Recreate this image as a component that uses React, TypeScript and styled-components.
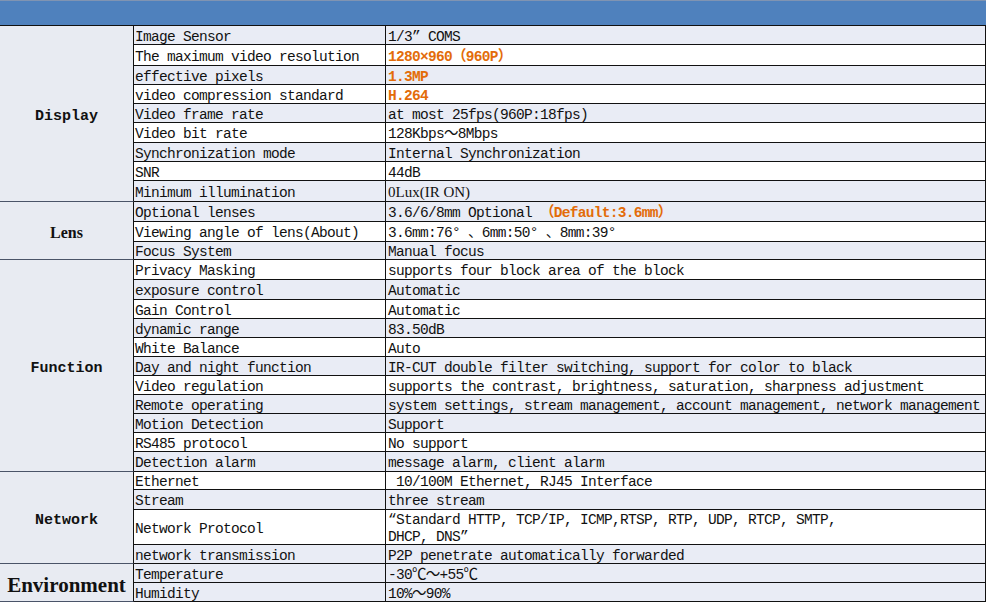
import React from "react";
import styled, { createGlobalStyle } from "styled-components";

const Global = createGlobalStyle`
  html, body { margin: 0; padding: 0; background: #ffffff; }
  body { font-family: "Liberation Mono", monospace; }
`;

type Seg = { t: string; k?: "hl" | "serif" };
type Row = { label: string; value: Seg[]; h: number; shade: boolean };
type Group = { name: string; kind: "mono" | "serif" | "big"; rows: Row[] };

const s = (t: string): Seg[] => [{ t }];

const groups: Group[] = [
  {
    name: "Display",
    kind: "mono",
    rows: [
      { label: "Image Sensor", value: s("1/3” COMS"), h: 19, shade: true },
      { label: "The maximum video resolution", value: [{ t: "1280×960（960P）", k: "hl" }], h: 21, shade: false },
      { label: "effective pixels", value: [{ t: "1.3MP", k: "hl" }], h: 19, shade: true },
      { label: "video compression standard", value: [{ t: "H.264", k: "hl" }], h: 19, shade: false },
      { label: "Video frame rate", value: s("at most 25fps(960P:18fps)"), h: 19, shade: true },
      { label: "Video bit rate", value: s("128Kbps～8Mbps"), h: 20, shade: false },
      { label: "Synchronization mode", value: s("Internal Synchronization"), h: 19, shade: true },
      { label: "SNR", value: s("44dB"), h: 19, shade: false },
      { label: "Minimum illumination", value: [{ t: "0Lux(IR ON)", k: "serif" }], h: 21, shade: true },
    ],
  },
  {
    name: "Lens",
    kind: "serif",
    rows: [
      { label: "Optional lenses", value: [{ t: "3.6/6/8mm Optional " }, { t: "（Default:3.6mm）", k: "hl" }], h: 20, shade: true },
      { label: "Viewing angle of lens(About)", value: s("3.6mm:76° 、6mm:50° 、8mm:39°"), h: 20, shade: false },
      { label: "Focus System", value: s("Manual focus"), h: 18, shade: true },
    ],
  },
  {
    name: "Function",
    kind: "mono",
    rows: [
      { label: "Privacy Masking", value: s("supports four block area of the block"), h: 20, shade: false },
      { label: "exposure control", value: s("Automatic"), h: 20, shade: true },
      { label: "Gain Control", value: s("Automatic"), h: 19, shade: false },
      { label: "dynamic range", value: s("83.50dB"), h: 19, shade: true },
      { label: "White Balance", value: s("Auto"), h: 19, shade: false },
      { label: "Day and night function", value: s("IR-CUT double filter switching, support for color to black"), h: 19, shade: true },
      { label: "Video regulation", value: s("supports the contrast, brightness, saturation, sharpness adjustment"), h: 19, shade: false },
      { label: "Remote operating", value: s("system settings, stream management, account management, network management"), h: 19, shade: true },
      { label: "Motion Detection", value: s("Support"), h: 19, shade: true },
      { label: "RS485 protocol", value: s("No support"), h: 19, shade: false },
      { label: "Detection alarm", value: s("message alarm, client alarm"), h: 20, shade: true },
    ],
  },
  {
    name: "Network",
    kind: "mono",
    rows: [
      { label: "Ethernet", value: s("\u00a010/100M Ethernet, RJ45 Interface"), h: 18, shade: false },
      { label: "Stream", value: s("three stream"), h: 20, shade: true },
      { label: "Network Protocol", value: s("“Standard HTTP, TCP/IP, ICMP,RTSP, RTP, UDP, RTCP, SMTP,\nDHCP, DNS”"), h: 35, shade: false },
      { label: "network transmission", value: s("P2P penetrate automatically forwarded"), h: 19, shade: true },
    ],
  },
  {
    name: "Environment",
    kind: "big",
    rows: [
      { label: "Temperature", value: s("-30℃～+55℃"), h: 19, shade: true },
      { label: "Humidity", value: s("10%～90%"), h: 19, shade: true },
    ],
  },
];

const Sheet = styled.div`
  width: 986px;
  display: flex;
  flex-direction: column;
`;

const HeaderBar = styled.div`
  box-sizing: border-box;
  height: 26px;
  background: #4f81bd;
  border-top: 1px solid #8094b2;
  border-bottom: 1px solid #111;
`;

const GroupBlock = styled.div`
  display: flex;
`;

const GroupLabel = styled.div<{ $kind: "mono" | "serif" | "big" }>`
  box-sizing: border-box;
  width: 134px;
  flex: none;
  display: flex;
  align-items: center;
  justify-content: center;
  background: #e8ebf2;
  border-right: 1px solid #111;
  border-bottom: 1px solid #4a5468;
  color: #111;
  font-weight: bold;
  font-family: ${(p) =>
    p.$kind === "mono" ? '"Liberation Mono", monospace' : '"Liberation Serif", serif'};
  font-size: ${(p) => (p.$kind === "mono" ? "15px" : p.$kind === "serif" ? "16px" : "21px")};
  padding-top: 5px;
`;

const RowList = styled.div`
  display: flex;
  flex-direction: column;
`;

const SpecRow = styled.div<{ $shade: boolean }>`
  box-sizing: border-box;
  display: grid;
  grid-template-columns: 252px 600px;
  border-bottom: 1px solid #111;
  background: ${(p) => (p.$shade ? "#e9ecf5" : "#ffffff")};
`;

const Cell = styled.div<{ $pad: number }>`
  box-sizing: border-box;
  display: flex;
  align-items: center;
  padding: 4px 0 0 ${(p) => p.$pad}px;
  border-right: 1px solid #111;
  font-family: "Liberation Mono", "Noto Sans CJK SC", monospace;
  font-size: 14.5px;
  letter-spacing: -0.7px;
  line-height: 17px;
  color: #111;
  white-space: pre-wrap;
  overflow: hidden;
`;

const ValueText = styled.div`
  white-space: pre-wrap;
`;

const Hl = styled.span`
  color: #e36c09;
  font-weight: bold;
`;

const Serif = styled.span`
  font-family: "Liberation Serif", serif;
  font-size: 15px;
  letter-spacing: 0;
`;

const renderSeg = (seg: Seg, i: number) =>
  seg.k === "hl" ? (
    <Hl key={i}>{seg.t}</Hl>
  ) : seg.k === "serif" ? (
    <Serif key={i}>{seg.t}</Serif>
  ) : (
    <React.Fragment key={i}>{seg.t}</React.Fragment>
  );

export default function App() {
  return (
    <>
      <Global />
      <Sheet>
        <HeaderBar />
        {groups.map((g) => (
          <GroupBlock key={g.name}>
            <GroupLabel $kind={g.kind}>{g.name}</GroupLabel>
            <RowList>
              {g.rows.map((r) => (
                <SpecRow key={r.label} $shade={r.shade} style={{ height: r.h }}>
                  <Cell $pad={1}>{r.label}</Cell>
                  <Cell $pad={2}>
                    <ValueText>{r.value.map(renderSeg)}</ValueText>
                  </Cell>
                </SpecRow>
              ))}
            </RowList>
          </GroupBlock>
        ))}
      </Sheet>
    </>
  );
}
